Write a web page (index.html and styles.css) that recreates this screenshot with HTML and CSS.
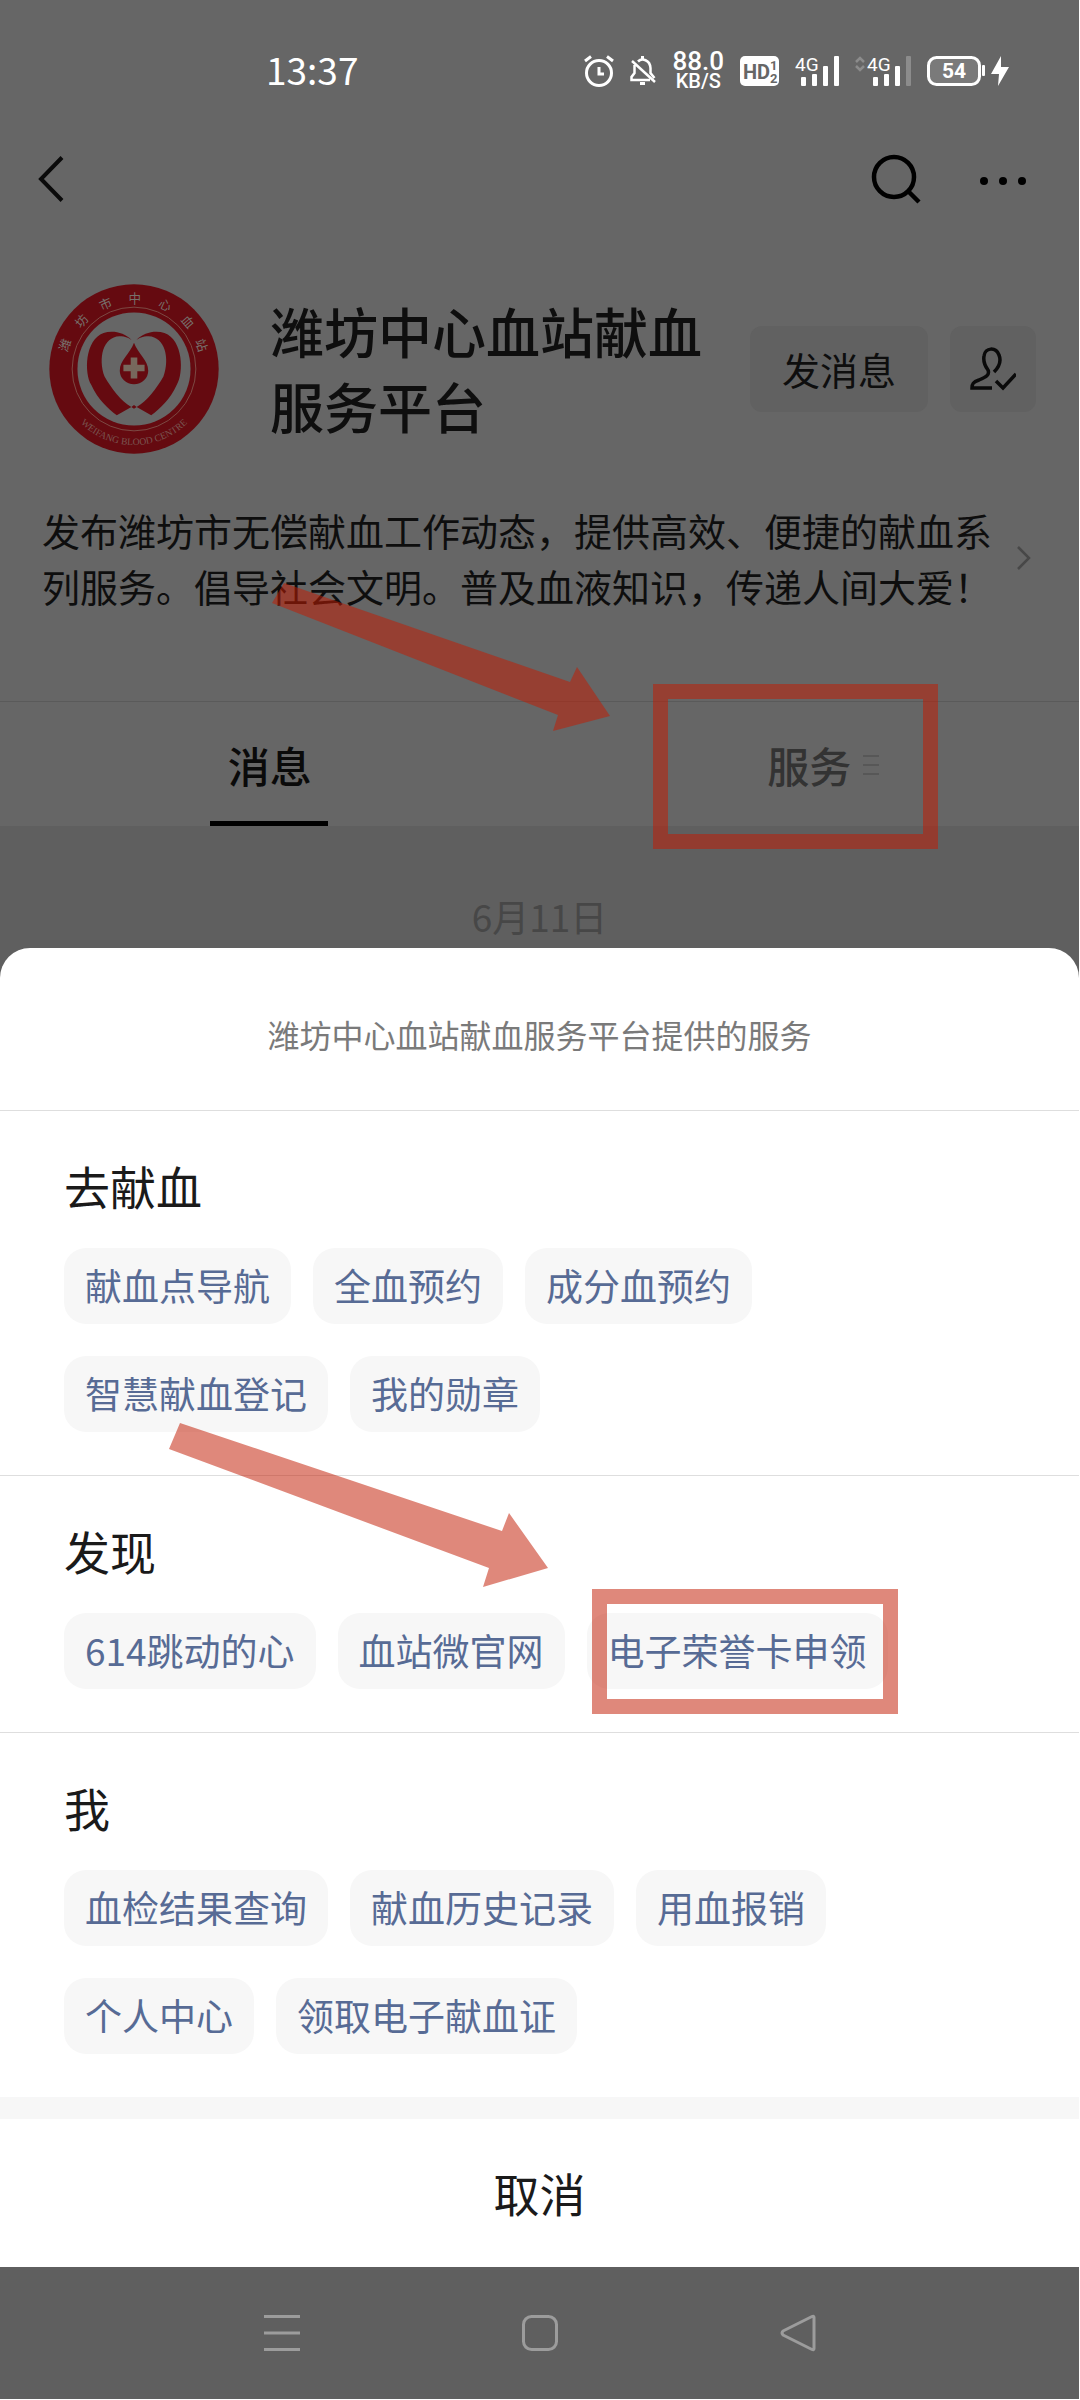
FILE: index.html
```html
<!DOCTYPE html>
<html lang="zh-CN">
  <head>
    <meta charset="utf-8">
    <meta name="viewport" content="width=device-width, initial-scale=1">
    <title>潍坊中心血站献血服务平台</title>
    <link rel="stylesheet" href="styles.css">
  </head>
  <body>
    <div class="screen">

      <div class="statusbar">
        <div class="statusbar__time">13:37</div>
        <div class="statusbar__icons">
          <svg width="30" height="32" viewBox="0 0 30 32" fill="none" stroke="#fff" stroke-width="3">
            <circle cx="15" cy="18" r="12.5"/>
            <path d="M15 12v7h5M1 6l6-4.500M29 6l-6-4.500"/>
          </svg>
          <svg width="26" height="32" viewBox="0 0 26 32" fill="none" stroke="#fff" stroke-width="2.500">
            <path d="M8 6.500C12 2.500 20 5 20.500 13v5l4 5M4.500 10v8L1.500 22v3H20M2 6l23 21"/>
            <path d="M12.500 1v3M10 28.500h5" stroke-width="3"/>
          </svg>
          <div class="netspeed">
            <div class="netspeed__value">88.0</div>
            <div class="netspeed__unit">KB/S</div>
          </div>
          <svg class="icontext" width="39" height="36" viewBox="0 -2 39 36">
            <rect y="1" width="39" height="30" rx="5" fill="#fff"/>
            <text x="3" y="24" font-size="20" font-weight="700" fill="#666">HD</text>
            <text x="30" y="15" font-size="13" font-weight="700" fill="#666">1</text>
            <text x="30" y="28" font-size="13" font-weight="700" fill="#666">2</text>
          </svg>
          <svg class="icontext" width="44" height="36" viewBox="0 -2 44 36" fill="#fff">
            <text x="0" y="16" font-size="19">4G</text>
            <rect x="6" y="22" width="5" height="9" rx="1"/>
            <rect x="17" y="19" width="5" height="12" rx="1"/>
            <rect x="28" y="11" width="5" height="20" rx="1"/>
            <rect x="39" y="1" width="5" height="30" rx="1"/>
          </svg>
          <svg class="icontext" width="56" height="36" viewBox="0 -2 56 36" fill="#fff">
            <path d="M1 7l4-4 4 4M1 11l4 4 4-4" fill="none" stroke="#8c8c8c" stroke-width="2.500"/>
            <text x="12" y="16" font-size="19">4G</text>
            <rect x="18" y="22" width="5" height="9" rx="1"/>
            <rect x="29" y="19" width="5" height="12" rx="1"/>
            <rect x="40" y="11" width="5" height="20" rx="1"/>
            <rect x="51" y="1" width="5" height="30" rx="1" fill="#8c8c8c"/>
          </svg>
          <svg class="icontext" width="82" height="32" viewBox="0 0 82 32" fill="#fff">
            <rect x="1.500" y="2.500" width="51" height="27" rx="8" fill="#7a7a7a" stroke="#fff" stroke-width="3"/>
            <rect x="55" y="10" width="3" height="11" rx="1"/>
            <text x="27" y="23" font-size="21" font-weight="700" text-anchor="middle">54</text>
            <path d="M74 1L64 19h8l-1 12 11-19h-8z"/>
          </svg>
        </div>
      </div>

      <div class="topbar">
        <button class="iconbtn" aria-label="返回">
          <svg width="26" height="46" viewBox="0 0 26 46" fill="none" stroke="#0a0a0a" stroke-width="4"><path d="M24 1.500L3 23l21 21.500"/></svg>
        </button>
        <div class="topbar__right">
          <button class="iconbtn" aria-label="搜索">
            <svg width="50" height="50" viewBox="0 0 50 50" fill="none" stroke="#000" stroke-width="4.500"><circle cx="23" cy="23" r="20"/><path d="M37 37l11 11"/></svg>
          </button>
          <button class="iconbtn" aria-label="更多">
            <svg width="48" height="50" viewBox="0 0 48 50"><circle cx="5" cy="27" r="4"/><circle cx="24" cy="27" r="4"/><circle cx="43" cy="27" r="4"/></svg>
          </button>
        </div>
      </div>

      <div class="profile">
        <svg class="profile__logo" viewBox="57 41 514 512">
          <defs>
            <path id="arcBottom" d="M84 297a230 230 0 0 0 460 0"/>
          </defs>
          <circle cx="314" cy="297" r="256" fill="#650a10"/>
          <circle cx="314" cy="297" r="187" fill="none" stroke="#7c4a44" stroke-width="3"/>
          <circle cx="314" cy="297" r="171" fill="#666"/>
          <g fill="#650a10">
            <path id="ribbon" d="M307 210C285 186 250 180 222 188C165 208 163 310 185 345C205 390 235 415 262 437L306 412C275 395 245 355 225 320C205 265 220 200 270 198C288 198 300 204 307 210z"/>
            <use href="#ribbon" transform="translate(628 0) scale(-1 1)"/>
            <path d="M314 218C325 250 357 270 357 302a43 41 0 0 1-86 0C271 270 303 250 314 218zM306 412l8-6 8 6-8 5z"/>
          </g>
          <path d="M304 262h20v22h22v20h-22v22h-20v-22h-22v-20h22z" fill="#77685c"/>
          <g class="profile__ring" font-size="38" fill="#77706c" text-anchor="middle">
            <text transform="translate(105 225) rotate(-71)" y="14">潍</text>
            <text transform="translate(155 152) rotate(-48)" y="14">坊</text>
            <text transform="translate(228 100) rotate(-24)" y="14">市</text>
            <text transform="translate(316 83)" y="14">中</text>
            <text transform="translate(408 103) rotate(25)" y="14">心</text>
            <text transform="translate(477 155) rotate(49)" y="14">血</text>
            <text transform="translate(518 225) rotate(71)" y="14">站</text>
          </g>
          <text class="profile__ringen" font-size="29" fill="#7a5550"><textPath href="#arcBottom" startOffset="50%" text-anchor="middle">WEIFANG BLOOD CENTRE</textPath></text>
        </svg>
        <h1 class="profile__name">潍坊中心血站献血服务平台</h1>
        <button class="greybtn">发消息</button>
        <button class="greybtn greybtn__icon" aria-label="已关注">
          <svg width="46" height="44" viewBox="0 0 46 44" fill="none" stroke="#0a0a0a" stroke-width="3.500">
            <path d="M24 25C30 19 31 13 29 8C26 0 15 0 14 9C13 15 15 19 18 23C20 28 16 30 9 33C3 35 2 37 2 41h20M26 34l7 7 13-14"/>
          </svg>
        </button>
      </div>

      <div class="about">
        <p class="about__text">发布潍坊市无偿献血工作动态，提供高效、便捷的献血系列服务。倡导社会文明。普及血液知识，传递人间大爱！</p>
        <svg width="14" height="24" viewBox="0 0 14 24" fill="none" stroke="#484848" stroke-width="2.500"><path d="M1 1l11 11L1 23"/></svg>
      </div>

      <div class="tabs">
        <button class="tab tab__active">消息</button>
        <button class="tab">服务
          <svg class="tab__menu" width="16" height="22" viewBox="0 0 16 22" stroke="#575757" stroke-width="2"><path d="M0 2h16M0 11h16M0 20h16"/></svg>
        </button>
      </div>

      <div class="date">6月11日</div>

      <div class="sheet">
        <div class="sheet__title">潍坊中心血站献血服务平台提供的服务</div>
        <div class="group">
          <h2>去献血</h2>
          <div class="chips">
            <button class="chip">献血点导航</button>
            <button class="chip">全血预约</button>
            <button class="chip">成分血预约</button>
            <button class="chip">智慧献血登记</button>
            <button class="chip">我的勋章</button>
          </div>
        </div>
        <div class="group">
          <h2>发现</h2>
          <div class="chips">
            <button class="chip">614跳动的心</button>
            <button class="chip">血站微官网</button>
            <button class="chip">电子荣誉卡申领</button>
          </div>
        </div>
        <div class="group">
          <h2>我</h2>
          <div class="chips">
            <button class="chip">血检结果查询</button>
            <button class="chip">献血历史记录</button>
            <button class="chip">用血报销</button>
            <button class="chip">个人中心</button>
            <button class="chip">领取电子献血证</button>
          </div>
        </div>
        <button class="cancel">取消</button>
      </div>

      <div class="navbar">
        <button class="iconbtn" aria-label="任务">
          <svg width="36" height="38" viewBox="0 0 36 38" stroke="#9c9c9c" stroke-width="3"><path d="M0 2.500h36M0 19h36M0 35.500h36"/></svg>
        </button>
        <button class="iconbtn" aria-label="主页">
          <svg width="36" height="38" viewBox="0 0 36 38" fill="none" stroke="#9c9c9c" stroke-width="3"><rect x="1.500" y="2.500" width="33" height="33" rx="8"/></svg>
        </button>
        <button class="iconbtn" aria-label="后退">
          <svg width="36" height="38" viewBox="0 0 36 38" fill="none" stroke="#9c9c9c" stroke-width="3" stroke-linejoin="round"><path d="M34 3.500v31q0 2-2 1L3 21q-2-2 0-4L32 2.500q2-1 2 1z"/></svg>
        </button>
      </div>

      <!-- arrows and frames drawn over the page -->
      <svg class="marks" width="1080" height="2400" viewBox="0 0 1080 2400">
        <path d="M284 583L570 682L577 667L610 716L553 731L558 715L272 603z"/>
        <path d="M180 1423L502 1531L509 1513L548 1568L483 1587L489 1568L169 1449z"/>
        <path fill-rule="evenodd" d="M653 684h285v165H653zM668 699v135h255V699z"/>
        <path fill-rule="evenodd" d="M592 1589h306v125H592zM607 1604v95h276v-95z"/>
      </svg>
    </div>
  </body>
</html>
```
FILE: styles.css
```css
* {
  box-sizing: border-box;
}

html, body {
  padding: 0px; margin: 0px;
  background: #fff;
}

body, button {
  font-family: "Noto Sans CJK SC", "Noto Sans", sans-serif;
}

h1, h2, p {
  margin: 0px;
}

svg {
  display: block;
  flex: none;
}

button {
  border: 0;
  padding: 0px; margin: 0px;
  background: none;
  cursor: pointer;
}

.screen {
  position: relative;
  margin: 0px 1px 1px 0px;
  background: #5f5f5f;
  overflow: hidden;
}

/* status bar */
.statusbar {
  display: flex;
  align-items: center;
  justify-content: space-between;
  height: 142px;
  padding: 0px 70px 0px 266px;
  background: #666;
  color: #fff;
}

.statusbar__time {
  padding-bottom: 4px;
  font-size: 37px;
  line-height: 40px;
}

.statusbar__icons {
  display: flex;
  align-items: center;
  gap: 16px;
}

.icontext {
  font-family: Roboto, sans-serif;
}

.netspeed {
  font-family: Roboto, sans-serif;
  font-weight: 500;
  text-align: center;
}
.netspeed__value {
  font-size: 26px;
  line-height: 20px;
}
.netspeed__unit {
  font-size: 20px;
  line-height: 20px;
}

/* top bar */
.topbar {
  display: flex;
  align-items: center;
  justify-content: space-between;
  height: 74px;
  padding: 0px 52px 0px 38px;
  background: #666;
}
.topbar__right {
  display: flex;
  gap: 58px;
}

/* account */
.profile {
  display: flex;
  align-items: center;
  padding: 68px 43px 0px 49px;
  background: #666;
}

.profile__logo {
  width: 170px; height: 170px;
}
.profile__ring {
  font-family: "Noto Sans CJK SC", sans-serif;
}
.profile__ringen {
  font-family: "Liberation Serif", serif;
}

.profile__name {
  flex: 1;
  margin: 0px 22px 2px 51px;
  font-size: 54px;
  line-height: 75px;
  font-weight: 500;
  color: #0e0e0e;
}

.greybtn {
  height: 86px;
  padding: 0px 32px 2px;
  border-radius: 12px;
  background: #616161;
  color: #0e0e0e;
  font-size: 38px;
}
.greybtn__icon {
  margin-left: 22px;
  padding: 0px 20px;
}

.about {
  display: flex;
  align-items: center;
  justify-content: space-between;
  padding: 48px 48px 87px 42px;
  background: #666;
}
.about__text {
  flex: 1;
  margin-right: 20px;
  font-size: 38px;
  line-height: 56px;
  color: #0e0e0e;
}

/* tabs */
.tabs {
  display: flex;
  height: 125px;
  border-top: 1px solid #5a5a5a;
  background: #666;
}
.tab {
  position: relative;
  flex: 1;
  font-size: 42px;
  font-weight: 500;
  color: #333;
}
.tab__active {
  color: #0a0a0a;
}
.tab__active::after {
  content: "";
  position: absolute;
  left: 50%; bottom: 0px;
  width: 118px; height: 5px;
  margin-left: -60px;
  background: #000;
}
.tab__menu {
  position: absolute;
  left: 50%; top: 52px;
  margin-left: 54px;
}

.date {
  padding: 70px 0px 12px;
  font-size: 37px;
  line-height: 40px;
  text-align: center;
  color: #474747;
}

/* bottom sheet */
.sheet {
  border-radius: 30px 30px 0px 0px;
  background: #fff;
  overflow: hidden;
}

.sheet__title {
  padding: 62px 0px 52px;
  font-size: 32px;
  line-height: 48px;
  text-align: center;
  color: #7a7a7a;
}

.group {
  padding: 40px 64px 43px;
  border-top: 1px solid #dedede;
}
.group h2 {
  margin-bottom: 29px;
  font-size: 46px;
  line-height: 68px;
  font-weight: 400;
  color: #1a1a1a;
}

.chips {
  display: flex;
  flex-wrap: wrap;
  gap: 32px 22px;
}
.chip {
  height: 76px;
  padding: 0px 21px 2px;
  border-radius: 22px;
  background: #f7f7f7;
  color: #576b95;
  font-size: 37px;
}

.cancel {
  display: block;
  width: 100%; height: 170px;
  padding-bottom: 2px;
  border-top: 22px solid #f7f7f7;
  font-size: 46px;
  color: #1a1a1a;
}

/* system buttons */
.navbar {
  display: flex;
  align-items: center;
  justify-content: center;
  gap: 222px;
  height: 132px;
}

.marks {
  position: absolute;
  left: 0px; top: 0px;
  fill: #c31c04;
  opacity: 0.52;
  pointer-events: none;
}
```
